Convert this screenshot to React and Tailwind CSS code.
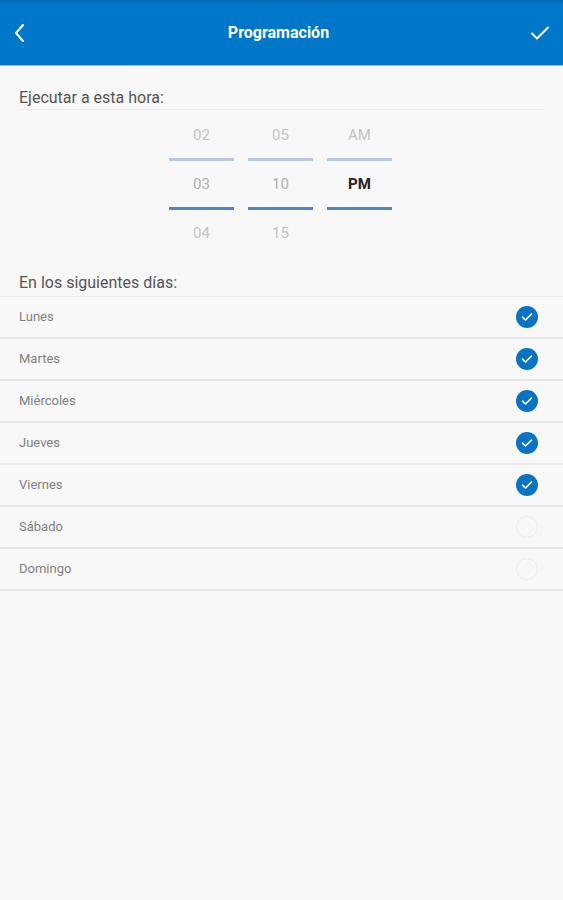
import React from "react";

const days = [
  ["Lunes", true],
  ["Martes", true],
  ["Miércoles", true],
  ["Jueves", true],
  ["Viernes", true],
  ["Sábado", false],
  ["Domingo", false],
];

function Check({ on }) {
  if (!on)
    return <div className="w-[22px] h-[22px] rounded-full border border-[#ececec]" />;
  return (
    <div className="w-[22px] h-[22px] rounded-full bg-[#0a73c4] flex items-center justify-center">
      <svg width="12" height="10" viewBox="0 0 12 10" fill="none">
        <path d="M1.5 5.2 L4.5 8 L10.5 2" stroke="white" strokeWidth="1.6" strokeLinecap="round" strokeLinejoin="round" />
      </svg>
    </div>
  );
}

function Col({ items, boldMid }) {
  return (
    <div className="w-[65px] flex flex-col items-center">
      <div className="h-[46px] w-full flex items-center justify-center text-[15px] text-[#c4c4c4]">
        {items[0]}
      </div>
      <div className="h-[3px] w-full bg-[#b8c8e2]" />
      <div className={"h-[46px] w-full flex items-center justify-center text-[15px] " + (boldMid ? "text-[#222] font-bold" : "text-[#b0b0b0]")}>
        {items[1]}
      </div>
      <div className="h-[3px] w-full bg-[#4f87c6]" />
      <div className="h-[46px] w-full flex items-center justify-center text-[15px] text-[#c4c4c4]">
        {items[2]}
      </div>
    </div>
  );
}

export default function App() {
  return (
    <div
      className="w-[563px] h-[900px] bg-[#f8f8f8] flex flex-col"
      style={{ fontFamily: "Roboto, 'Noto Sans', sans-serif" }}
    >
      <div className="h-[66px] bg-[#0077c8] bg-gradient-to-b from-[#0464a8] via-[#0077c8] via-[6%] to-[#0077c8] flex items-center justify-between px-[12px] border-b border-[#8cc0ea] shrink-0">
        <svg width="16" height="22" viewBox="0 0 16 22" fill="none">
          <path d="M11 3 L4 11 L11 19" stroke="white" strokeWidth="2" strokeLinecap="round" strokeLinejoin="round" />
        </svg>
        <div className="text-white font-bold text-[16px]">Programación</div>
        <svg width="22" height="18" viewBox="0 0 22 18" fill="none">
          <path d="M3 9.5 L8 14.5 L19 3.5" stroke="white" strokeWidth="2" strokeLinecap="round" strokeLinejoin="round" />
        </svg>
      </div>

      <div className="px-[19px] pt-[22px]">
        <div className="text-[16px] text-[#555] pb-[1px] border-b border-[#ececec] leading-[20px]">
          Ejecutar a esta hora:
        </div>
      </div>

      <div className="flex justify-start gap-[14px] mt-[2px] pl-[169px]">
        <Col items={["02", "03", "04"]} />
        <Col items={["05", "10", "15"]} />
        <Col items={["AM", "PM", ""]} boldMid />
      </div>

      <div className="px-[19px] mt-[17px] text-[16px] text-[#555] leading-[20px] pb-[3px]">
        En los siguientes días:
      </div>

      <div className="border-t border-[#e8e8e8]">
        {days.map(([d, on]) => (
          <div key={d} className="h-[42px] flex items-center justify-between pl-[19px] pr-[25px] border-b-2 border-[#e6e6e6]">
            <span className="text-[13px] text-[#808080]">{d}</span>
            <Check on={on} />
          </div>
        ))}
      </div>
    </div>
  );
}
